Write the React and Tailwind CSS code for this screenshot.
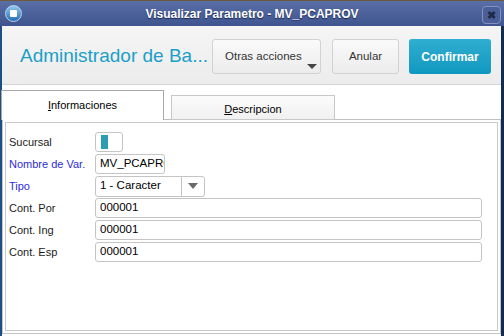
import React from 'react';

const Field = ({ label, blue, children }) => (
    <div className="flex items-center h-[22px]">
        <span className={`w-[86px] text-[11px] ${blue ? 'text-[#2b2bdc]' : 'text-[#1a1a1a]'}`}>{label}</span>
        {children}
    </div>
);

const TextBox = ({ value, className }) => (
    <div className={`h-[20px] border border-[#c4c4c4] rounded-[3px] bg-white px-[4px] flex items-center text-[11.5px] text-black overflow-hidden whitespace-nowrap ${className}`}>
        {value}
    </div>
);

const App = () => {
    return (
        <div className="w-[504px] h-[336px] flex flex-col bg-white overflow-hidden" style={{ fontFamily: '"Liberation Sans", Arial, sans-serif' }}>
            {/* Title bar */}
            <div className="h-[26px] flex items-center relative bg-gradient-to-b from-[#5a6ea6] to-[#3f558f] border-t border-[#6d5a3a]">
                <div className="absolute left-[5px] top-[4px] w-[17px] h-[17px] rounded-full bg-gradient-to-b from-[#8fc8f0] to-[#1f70b8] border border-[#c0d4ea] flex items-center justify-center">
                    <div className="w-[7px] h-[7px] bg-white rounded-[1px]"></div>
                </div>
                <div className="flex-1 text-center text-white font-bold text-[12px] [text-shadow:0_1px_1px_#1a2550]">Visualizar Parametro - MV_PCAPROV</div>
                <div className="absolute right-[3px] top-[5px] w-[19px] h-[18px] rounded-[4px] border border-[#8393c0] bg-[#4a5f98] flex items-center justify-center text-[#1f2a48] text-[11px] font-bold leading-none">✖</div>
            </div>

            <div className="flex-1 flex flex-col border-l-2 border-l-[#1d4f86] border-r-[3px] border-r-[#0f2c52]">
                {/* Header */}
                <div className="h-[59px] pt-[3px] flex items-center bg-gradient-to-b from-[#f5f5f5] to-[#ececec] border-b border-[#d4d4d4]">
                    <div className="w-[210px] pl-[18px] text-[19px] text-[#1b9fc8] whitespace-nowrap">Administrador de Ba...</div>
                    <div className="w-[109px] h-[35px] mr-[11px] relative rounded-[3px] border border-[#d2d2d2] bg-gradient-to-b from-[#fafafa] to-[#ececec] flex items-center pl-[12px] text-[11.5px] text-[#333]">
                        Otras acciones
                        <div className="absolute right-[3px] bottom-[4px] w-0 h-0 border-l-[5px] border-r-[5px] border-t-[5px] border-l-transparent border-r-transparent border-t-[#444]"></div>
                    </div>
                    <div className="w-[67px] h-[35px] mr-[10px] rounded-[3px] border border-[#d2d2d2] bg-gradient-to-b from-[#fafafa] to-[#ececec] flex items-center justify-center text-[11.5px] text-[#333]">Anular</div>
                    <div className="w-[82px] h-[35px] rounded-[3px] bg-gradient-to-b from-[#2eaed0] to-[#0f98c0] flex items-center justify-center text-[12px] font-bold text-white">Confirmar</div>
                </div>

                {/* Tabs */}
                <div className="flex items-end h-[35px] pt-[5px]">
                    <div className="w-[163px] h-[30px] -ml-[1px] bg-white border border-b-0 border-[#a8a8a8] flex items-center justify-center text-[11px] text-black relative z-10">
                        <span><span className="underline">I</span>nformaciones</span>
                    </div>
                    <div className="w-[7px] h-full border-b border-[#c0c0c0]"></div>
                    <div className="w-[164px] h-[25px] bg-gradient-to-b from-[#fbfbfb] to-[#f1f1f1] border border-[#c8c8c8] flex items-center justify-center pt-[3px] text-[11px] text-black">
                        <span><span className="underline">D</span>escripcion</span>
                    </div>
                    <div className="flex-1 h-[1px] border-b border-[#c0c0c0]"></div>
                </div>

                {/* Panel */}
                <div className="flex-1 mb-[2px] -mt-[1px] border border-[#c4c4c4] border-t-0 p-[2px] pt-[3px]">
                    <div className="h-full border border-[#c8c8c8] flex flex-col pt-[8px] pl-[3px] pr-[15px]">
                        <Field label="Sucursal">
                            <div className="w-[28px] h-[20px] border border-[#c4c4c4] rounded-[3px] bg-white flex items-center pl-[5px]">
                                <div className="w-[7px] h-[14px] bg-[#2e9bb4]"></div>
                            </div>
                        </Field>
                        <Field label="Nombre de Var." blue>
                            <TextBox value="MV_PCAPROV" className="w-[70px]" />
                        </Field>
                        <Field label="Tipo" blue>
                            <div className="w-[110px] h-[21px] border border-[#c4c4c4] rounded-[3px] bg-white flex items-center text-[11.5px]">
                                <span className="flex-1 pl-[4px]">1 - Caracter</span>
                                <div className="w-[23px] h-full border-l border-[#c4c4c4] flex items-center justify-center">
                                    <div className="w-0 h-0 border-l-[5px] border-r-[5px] border-t-[6px] border-l-transparent border-r-transparent border-t-[#6a6a6a]"></div>
                                </div>
                            </div>
                        </Field>
                        <Field label="Cont. Por">
                            <TextBox value="000001" className="flex-1" />
                        </Field>
                        <Field label="Cont. Ing">
                            <TextBox value="000001" className="flex-1" />
                        </Field>
                        <Field label="Cont. Esp">
                            <TextBox value="000001" className="flex-1" />
                        </Field>
                    </div>
                </div>
            </div>
        </div>
    );
};

export default App;
